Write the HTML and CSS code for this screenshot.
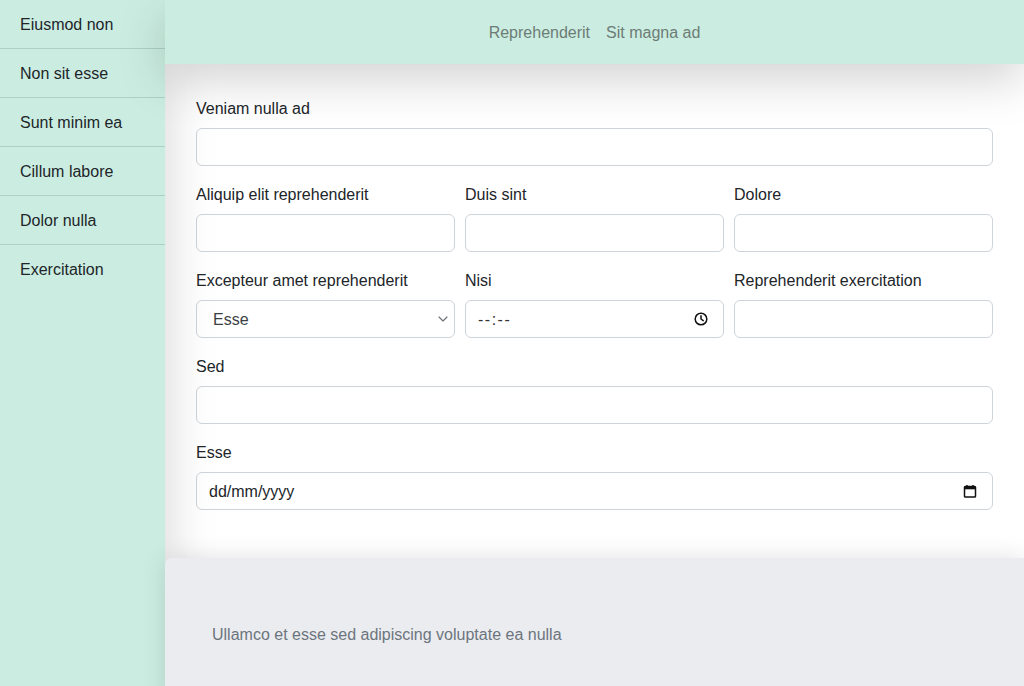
FILE: index.html
```html
<!DOCTYPE html>
<html lang="en">
<head>
<meta charset="utf-8">
<title>Form</title>
<link rel="stylesheet" href="styles.css">
</head>
<body>
<div class="layout">
  <aside class="sidebar">
    <ul class="side-list">
      <li class="side-item">Eiusmod non</li>
      <li class="side-item">Non sit esse</li>
      <li class="side-item">Sunt minim ea</li>
      <li class="side-item">Cillum labore</li>
      <li class="side-item">Dolor nulla</li>
      <li class="side-item">Exercitation</li>
    </ul>
  </aside>
  <div class="main">
    <header class="topbar">
      <nav class="nav">
        <a class="nav-link" href="#">Reprehenderit</a>
        <a class="nav-link" href="#">Sit magna ad</a>
      </nav>
    </header>
    <section class="content">
      <form class="form">
        <div class="row">
          <div class="field">
            <label class="label">Veniam nulla ad</label>
            <input class="control" type="text">
          </div>
        </div>
        <div class="row cols3">
          <div class="field">
            <label class="label">Aliquip elit reprehenderit</label>
            <input class="control" type="text">
          </div>
          <div class="field">
            <label class="label">Duis sint</label>
            <input class="control" type="text">
          </div>
          <div class="field">
            <label class="label">Dolore</label>
            <input class="control" type="text">
          </div>
        </div>
        <div class="row cols3">
          <div class="field">
            <label class="label">Excepteur amet reprehenderit</label>
            <div class="wrap">
              <select class="control select">
                <option>Esse</option>
              </select>
              <svg class="chev" width="10" height="6" viewBox="0 0 10 6"><path d="M1 1l4 4 4-4" fill="none" stroke="#6b6f75" stroke-width="1.1" stroke-linecap="round" stroke-linejoin="round"/></svg>
            </div>
          </div>
          <div class="field">
            <label class="label">Nisi</label>
            <div class="wrap">
              <input class="control fake time" type="text" placeholder="--:--">
              <svg class="ico" width="14" height="14" viewBox="0 0 14 14"><circle cx="7" cy="7" r="5.8" fill="none" stroke="#111" stroke-width="1.5"/><path d="M7 3.8V7l2.2 1.6" fill="none" stroke="#111" stroke-width="1.5" stroke-linecap="round" stroke-linejoin="round"/></svg>
            </div>
          </div>
          <div class="field">
            <label class="label">Reprehenderit exercitation</label>
            <input class="control" type="text">
          </div>
        </div>
        <div class="row">
          <div class="field">
            <label class="label">Sed</label>
            <input class="control" type="text">
          </div>
        </div>
        <div class="row">
          <div class="field">
            <label class="label">Esse</label>
            <div class="wrap">
              <input class="control fake" type="text" placeholder="dd/mm/yyyy">
              <svg class="ico" width="14" height="14" viewBox="0 0 14 14"><rect x="1.5" y="2.5" width="11" height="10.5" rx="0.8" fill="none" stroke="#111" stroke-width="1.5"/><rect x="1.5" y="2.5" width="11" height="2.8" fill="#111"/><path d="M4 1v2.5M10 1v2.5" stroke="#111" stroke-width="1.5"/></svg>
            </div>
          </div>
        </div>
      </form>
    </section>
    <footer class="footer">
      <p class="footer-text">Ullamco et esse sed adipiscing voluptate ea nulla</p>
    </footer>
  </div>
</div>
</body>
</html>
```
FILE: styles.css
```css
* { box-sizing: border-box; }
html, body { margin: 0; padding: 0; }
body {
  font-family: "Liberation Sans", Arial, sans-serif;
  font-size: 16px;
  line-height: 24px;
  color: #212529;
  background: #fff;
}
.layout {
  display: flex;
  min-height: 100vh;
}
.sidebar {
  position: relative;
  z-index: 1;
  width: 165px;
  flex: 0 0 165px;
  background: #cbede1;
  box-shadow: 0 1rem 3rem rgba(0, 0, 0, 0.175);
}
.side-list {
  list-style: none;
  margin: 0;
  padding: 0;
}
.side-item {
  padding: 13px 20px 11px;
  height: 49px;
  border-bottom: 1px solid #abd2c4;
}
.side-item:last-child { border-bottom: none; }
.main {
  flex: 1;
  display: flex;
  flex-direction: column;
  min-width: 0;
}
.topbar {
  position: relative;
  z-index: 2;
  height: 64px;
  padding-top: 2px;
  background: #cbede1;
  display: flex;
  align-items: center;
  justify-content: center;
  box-shadow: 0 1rem 3rem rgba(0, 0, 0, 0.175);
}
.nav {
  display: flex;
  gap: 16px;
}
.nav-link {
  color: #6d7c76;
  text-decoration: none;
}
.content {
  padding: 32px 31px 48px 31px;
}
.form {
  display: flex;
  flex-direction: column;
  gap: 16px;
}
.row {
  display: grid;
  grid-template-columns: 1fr;
  gap: 10px;
}
.row.cols3 {
  grid-template-columns: 1fr 1fr 1fr;
}
.field {
  display: flex;
  flex-direction: column;
}
.label {
  display: block;
  padding-top: 1px;
  height: 24px;
  margin-bottom: 8px;
  line-height: 24px;
}
.wrap {
  position: relative;
}
.control {
  display: block;
  width: 100%;
  height: 38px;
  padding: 7px 12px 5px;
  font: inherit;
  color: #212529;
  background: #fff;
  border: 1px solid #ced4da;
  border-radius: 6px;
  appearance: none;
  -webkit-appearance: none;
  outline: none;
}
.select {
  padding-left: 16px;
  color: #3a3f44;
}
.fake::placeholder {
  color: #212529;
  opacity: 1;
}
.time::placeholder {
  letter-spacing: 1.5px;
  color: #333;
}
.chev {
  position: absolute;
  right: 7px;
  top: 16px;
}
.ico {
  position: absolute;
  right: 16px;
  top: 12px;
}
.footer {
  position: relative;
  z-index: 2;
  background: #ebecf0;
  border-top-left-radius: 6px;
  padding: 65px 47px 63px;
  box-shadow: 0 0 1.5rem rgba(0, 0, 0, 0.12);
}
.footer-text {
  margin: 0;
  color: #6c757d;
}
```
